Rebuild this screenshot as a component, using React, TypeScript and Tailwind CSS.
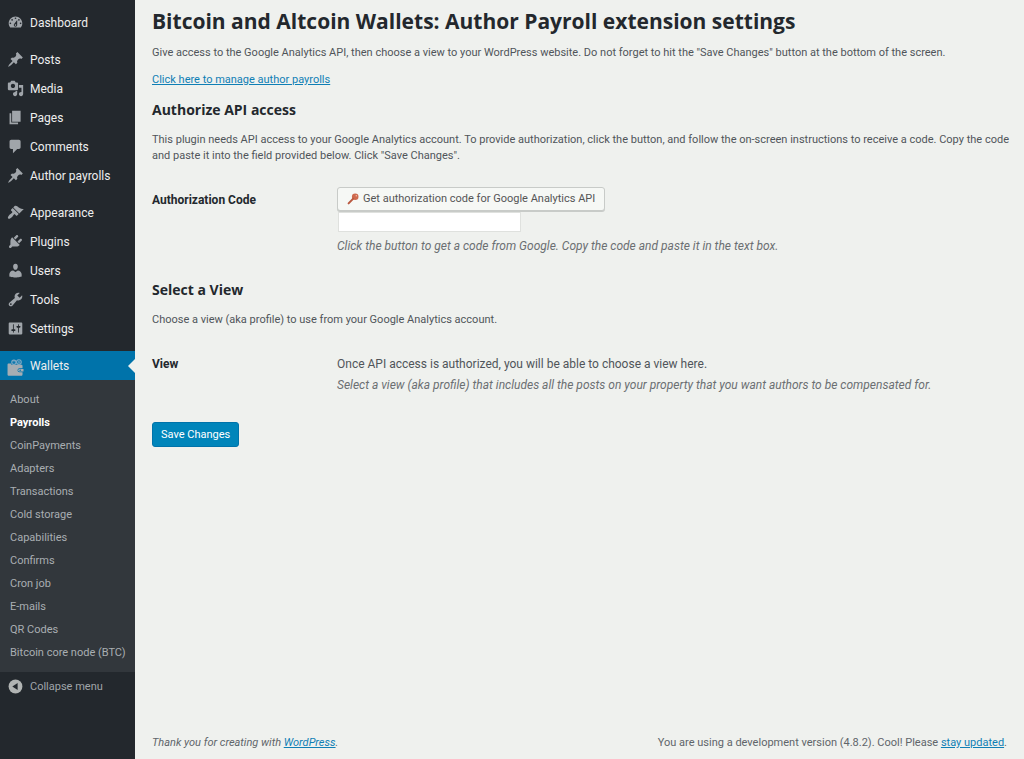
import React from "react";

type MenuItem = { label: string; icon: string };

const icons = {
  dashboard:
    "M3.76 16h12.48c1.1-1.37 1.76-3.11 1.76-5 0-4.42-3.58-8-8-8s-8 3.58-8 8c0 1.89.66 3.63 1.76 5zM10 4c.55 0 1 .45 1 1s-.45 1-1 1-1-.45-1-1 .45-1 1-1zM6 6c.55 0 1 .45 1 1s-.45 1-1 1-1-.45-1-1 .45-1 1-1zm8 0c.55 0 1 .45 1 1s-.45 1-1 1-1-.45-1-1 .45-1 1-1zm-5.37 5.55L12 7v6c0 1.1-.9 2-2 2s-2-.9-2-2c0-.57.24-1.08.63-1.45zM4 10c.55 0 1 .45 1 1s-.45 1-1 1-1-.45-1-1 .45-1 1-1zm12 0c.55 0 1 .45 1 1s-.45 1-1 1-1-.45-1-1 .45-1 1-1zm-5 3c0-.55-.45-1-1-1s-1 .45-1 1 .45 1 1 1 1-.45 1-1z",
  pin: "M10.44 3.02l1.82-1.82 6.36 6.35-1.83 1.82c-1.05-.68-2.48-.57-3.41.36l-.75.75c-.92.93-1.04 2.35-.35 3.41l-1.83 1.82-2.41-2.41-2.8 2.79c-.42.42-3.38 2.71-3.8 2.29s1.86-3.39 2.28-3.81l2.79-2.79L4.1 9.36l1.83-1.82c1.05.69 2.48.57 3.4-.36l.75-.75c.93-.92 1.05-2.35.36-3.41z",
  media:
    "M13 11V4c0-.55-.45-1-1-1h-1.67L9 1H5L3.67 3H2c-.55 0-1 .45-1 1v7c0 .55.45 1 1 1h10c.55 0 1-.45 1-1zM7 4.5c1.38 0 2.5 1.12 2.5 2.5S8.38 9.5 7 9.5 4.5 8.38 4.5 7 5.62 4.5 7 4.5zM14 6h5v10.5c0 1.38-1.12 2.5-2.5 2.5S14 17.88 14 16.5s1.12-2.5 2.5-2.5c.17 0 .34.02.5.05V9h-3V6zm-4 8.05V13h2v3.5c0 1.38-1.12 2.5-2.5 2.5S7 17.88 7 16.5 8.12 14 9.5 14c.17 0 .34.02.5.05z",
  page: "M6 15V2h10v13H6zm-1 1h8v2H3V5h2v11z",
  comment:
    "M5 2h9c1.1 0 2 .9 2 2v7c0 1.1-.9 2-2 2h-2l-5 5v-5H5c-1.1 0-2-.9-2-2V4c0-1.1.9-2 2-2z",
  appearance:
    "M14.48 11.06L7.41 3.99l1.5-1.5c.5-.56 2.3-.47 3.51.32 1.21.8 1.43 1.28 2.91 2.1 1.18.64 2.45 1.26 4.45.85zm-.71.71L6.7 4.7 4.93 6.47c-.39.39-.39 1.02 0 1.41l1.06 1.06c.39.39.39 1.03 0 1.42-.6.6-1.43 1.11-2.21 1.69-.35.26-.7.53-1.01.84C1.43 14.23.4 16.08 1.4 17.07c.99 1 2.84-.03 4.18-1.36.31-.31.58-.66.85-1.02.57-.78 1.08-1.61 1.69-2.21.39-.39 1.02-.39 1.41 0l1.06 1.06c.39.39 1.02.39 1.41 0z",
  plugin:
    "M13.11 4.36L9.87 7.6 8 5.73l3.24-3.24c.35-.34 1.05-.2 1.56.32.52.51.66 1.21.31 1.55zm-8 1.77l.91-1.12 9.01 9.01-1.19.84c-.71.71-2.63 1.16-3.82 1.16H6.14L4.9 17.26c-.59.59-1.54.59-2.12 0-.59-.58-.59-1.53 0-2.12l1.24-1.24v-3.88c0-1.13.4-3.19 1.09-3.89zm7.26 3.97l3.24-3.24c.34-.35 1.04-.21 1.55.31.52.51.66 1.21.31 1.55l-3.24 3.25z",
  user: "M10 9.25c-2.27 0-2.73-3.44-2.73-3.44C7 4.02 7.82 2 9.97 2c2.16 0 2.98 2.02 2.71 3.81 0 0-.41 3.44-2.68 3.44zm0 2.57L12.72 10c2.39 0 4.52 2.33 4.52 4.53v2.49s-3.65 1.13-7.24 1.13c-3.65 0-7.24-1.13-7.24-1.13v-2.49c0-2.25 1.94-4.48 4.47-4.48z",
  tools:
    "M16.68 9.77c-1.34 1.34-3.3 1.67-4.95.99l-5.41 6.52c-.99.99-2.59.99-3.58 0s-.99-2.59 0-3.57l6.52-5.42c-.68-1.65-.35-3.61.99-4.95 1.28-1.28 3.12-1.62 4.72-1.06l-2.89 2.89 2.82 2.82 2.86-2.87c.53 1.58.18 3.39-1.08 4.65zM3.81 16.21c.4.39 1.04.39 1.43 0 .4-.4.4-1.04 0-1.43-.39-.4-1.03-.4-1.43 0-.39.39-.39 1.03 0 1.43z",
  settings:
    "M18 16V4c0-.55-.45-1-1-1H3c-.55 0-1 .45-1 1v12c0 .55.45 1 1 1h14c.55 0 1-.45 1-1zM8 11h1c.55 0 1 .45 1 1s-.45 1-1 1H8v1.5c0 .28-.22.5-.5.5s-.5-.22-.5-.5V13H6c-.55 0-1-.45-1-1s.45-1 1-1h1V5.5c0-.28.22-.5.5-.5s.5.22.5.5V11zm5-2h-1c-.55 0-1-.45-1-1s.45-1 1-1h1V5.5c0-.28.22-.5.5-.5s.5.22.5.5V7h1c.55 0 1 .45 1 1s-.45 1-1 1h-1v5.5c0 .28-.22.5-.5.5s-.5-.22-.5-.5V9z",
};

const menuGroups: MenuItem[][] = [
  [{ label: "Dashboard", icon: icons.dashboard }],
  [
    { label: "Posts", icon: icons.pin },
    { label: "Media", icon: icons.media },
    { label: "Pages", icon: icons.page },
    { label: "Comments", icon: icons.comment },
    { label: "Author payrolls", icon: icons.pin },
  ],
  [
    { label: "Appearance", icon: icons.appearance },
    { label: "Plugins", icon: icons.plugin },
    { label: "Users", icon: icons.user },
    { label: "Tools", icon: icons.tools },
    { label: "Settings", icon: icons.settings },
  ],
];

const walletPages = [
  "About",
  "Payrolls",
  "CoinPayments",
  "Adapters",
  "Transactions",
  "Cold storage",
  "Capabilities",
  "Confirms",
  "Cron job",
  "E-mails",
  "QR Codes",
  "Bitcoin core node (BTC)",
];

function MenuLink({ label, icon }: MenuItem) {
  return (
    <li>
      <a href="#" className="flex h-[29px] items-center gap-1.5 pl-[7px] text-xs text-[#eeeeee]">
        <svg viewBox="0 0 20 20" className="size-[17px] shrink-0 fill-[#a0a5aa]" fillRule="evenodd" aria-hidden="true">
          <path d={icon} />
        </svg>
        {label}
      </a>
    </li>
  );
}

function WalletIcon() {
  return (
    <svg viewBox="0 0 16 16" className="mt-1 size-[17px] shrink-0" aria-hidden="true">
      <circle cx="6.5" cy="3" r="2" fill="none" stroke="#7fa9c4" strokeWidth="1.1" />
      <circle cx="11.2" cy="2.9" r="2.2" fill="none" stroke="#7fa9c4" strokeWidth="1.1" />
      <path d="M10.4 2.2H12M10.4 3.5h1.8M6 2.6h1.2" stroke="#7fa9c4" strokeWidth=".8" />
      <path d="M1.6 4.2h2l.6 1.2h9.4c.6 0 1 .4 1 1v2.3h-2.8a1.9 1.9 0 0 0 0 3.8h2.8v2.1c0 .7-.5 1.2-1.2 1.2H1.8c-.8 0-1.3-.5-1.3-1.3V5.4c0-.7.4-1.2 1.1-1.2z" fill="#a5adb3" />
      <path d="M11.8 9.4h3.7v2.4h-3.7a1.2 1.2 0 0 1 0-2.4z" fill="#a5adb3" />
      <circle cx="12.4" cy="10.6" r=".7" fill="#0073aa" />
    </svg>
  );
}

function Sidebar() {
  return (
    <nav aria-label="Main menu" className="w-[135px] shrink-0 bg-[#23282d] pt-2">
      <div className="flex flex-col gap-2">
        {menuGroups.map((group) => (
          <ul key={group[0].label}>
            {group.map((item) => (
              <MenuLink key={item.label} {...item} />
            ))}
          </ul>
        ))}
        <div>
          <a href="#" className="relative flex h-[29px] items-center gap-1.5 bg-[#0073aa] pl-[7px] text-xs text-[#eeeeee]">
            <WalletIcon />
            Wallets
            <span className="absolute right-0 top-1/2 size-0 -translate-y-1/2 border-y-[7px] border-r-[7px] border-y-transparent border-r-[#eff1ee]" />
          </a>
          <ul className="bg-[#32373c] py-2">
            {walletPages.map((page) => (
              <li key={page}>
                <a
                  href="#"
                  className={
                    page === "Payrolls"
                      ? "flex h-[23px] items-center whitespace-nowrap pl-2.5 text-[11px] font-bold text-white"
                      : "flex h-[23px] items-center whitespace-nowrap pl-2.5 text-[11px] text-[#a9aeb2]"
                  }
                >
                  {page}
                </a>
              </li>
            ))}
          </ul>
        </div>
      </div>
      <button type="button" className="flex h-[29px] w-full items-center gap-1.5 pl-[7px] text-[11px] text-[#a0a5aa]">
        <svg viewBox="0 0 16 16" className="size-[17px] shrink-0" aria-hidden="true">
          <circle cx="8" cy="8" r="6.5" fill="#b1b4b3" />
          <path d="M10 4.6v6.8L5 8z" fill="#23282d" />
        </svg>
        Collapse menu
      </button>
    </nav>
  );
}

export default function App() {
  return (
    <div className="flex min-h-screen bg-[#eff1ee] font-[Roboto,'Open_Sans',sans-serif] text-[11px] leading-4 text-[#50555a]">
      <Sidebar />
      <div className="flex min-w-0 flex-1 flex-col pl-[17px]">
        <main className="flex-1 pt-1.5 pr-1">
          <h1 className="font-['Open_Sans',sans-serif] text-[21px] leading-[30px] font-bold text-[#23282d]">
            Bitcoin and Altcoin Wallets: Author Payroll extension settings
          </h1>
          <p className="mt-[9px]">
            Give access to the Google Analytics API, then choose a view to your WordPress website. Do not forget to hit
            the "Save Changes" button at the bottom of the screen.
          </p>
          <p className="mt-[11px]">
            <a href="#" className="text-[#0f7fb5] underline">
              Click here to manage author payrolls
            </a>
          </p>

          <form onSubmit={(event) => event.preventDefault()}>
            <h2 className="mt-3 font-['Open_Sans',sans-serif] text-sm leading-5 font-bold text-[#23282d]">
              Authorize API access
            </h2>
            <p className="mt-3">
              This plugin needs API access to your Google Analytics account. To provide authorization, click the
              button, and follow the on-screen instructions to receive a code. Copy the code and paste it into the
              field provided below. Click "Save Changes".
            </p>
            <div className="mt-[23px] flex">
              <label htmlFor="auth-code" className="w-[185px] shrink-0 pt-[5px] text-xs font-bold text-[#23282d]">
                Authorization Code
              </label>
              <div className="flex min-w-0 flex-col items-start">
                <button
                  type="button"
                  className="flex h-6 items-center gap-1 rounded-[3px] border border-[#c8cbc8] bg-[#f6f8f5] px-[9px] text-[#555555] shadow-[0_1px_0_#c8cbc8]"
                >
                  <svg viewBox="0 0 12 12" className="size-3" aria-hidden="true">
                    <circle cx="8.2" cy="3.8" r="3.3" fill="#cf6a4e" />
                    <path d="M6.2 5.6L1.6 10.4" stroke="#b9583f" strokeWidth="2" strokeLinecap="round" />
                    <circle cx="9.3" cy="2.8" r=".7" fill="#f0c4b5" />
                  </svg>
                  Get authorization code for Google Analytics API
                </button>
                <input
                  id="auth-code"
                  type="text"
                  className="mt-px ml-px h-5 w-[183px] border border-[#dfe1de] bg-white px-1 text-xs outline-none"
                />
                <p className="mt-1.5 text-xs text-[#6b6f72] italic">
                  Click the button to get a code from Google. Copy the code and paste it in the text box.
                </p>
              </div>
            </div>

            <h2 className="mt-[26px] font-['Open_Sans',sans-serif] text-sm leading-5 font-bold text-[#23282d]">
              Select a View
            </h2>
            <p className="mt-3">Choose a view (aka profile) to use from your Google Analytics account.</p>
            <div className="mt-7 flex text-xs leading-4">
              <h3 className="w-[185px] shrink-0 font-bold text-[#23282d]">View</h3>
              <div>
                <p>Once API access is authorized, you will be able to choose a view here.</p>
                <p className="mt-[5px] text-[#6b6f72] italic">
                  Select a view (aka profile) that includes all the posts on your property that you want authors to be
                  compensated for.
                </p>
              </div>
            </div>
            <button
              type="submit"
              className="mt-[29px] h-[25px] rounded-[3px] border border-[#0073aa] bg-[#0085ba] px-2 text-white"
            >
              Save Changes
            </button>
          </form>
        </main>
        <footer className="flex justify-between gap-4 pr-[17px] pb-2 text-[#60656a]">
          <p className="italic">
            Thank you for creating with{" "}
            <a href="#" className="text-[#0f7fb5] underline">
              WordPress
            </a>
            .
          </p>
          <p>
            You are using a development version (4.8.2). Cool! Please{" "}
            <a href="#" className="text-[#0f7fb5] underline">
              stay updated
            </a>
            .
          </p>
        </footer>
      </div>
    </div>
  );
}
